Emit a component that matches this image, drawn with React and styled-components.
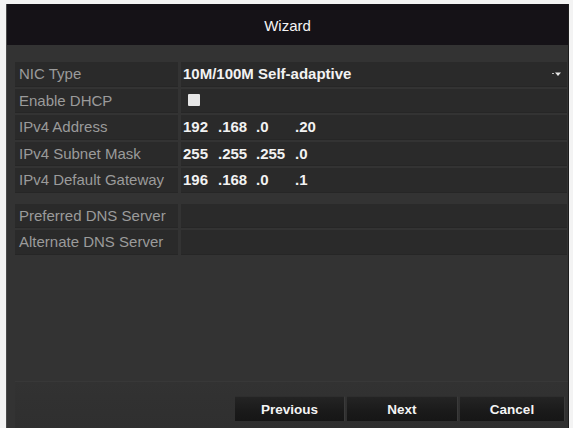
import React from "react";
import styled, { createGlobalStyle } from "styled-components";

const GlobalStyle = createGlobalStyle`
  html, body {
    margin: 0;
    padding: 0;
    background: #f3f3f3;
  }
  * {
    box-sizing: border-box;
  }
`;

const Frame = styled.div`
  height: 428px;
  padding: 4px 4px 0 6px;
  font-family: "Liberation Sans", Arial, sans-serif;
`;

const Window = styled.div`
  width: 563px;
  height: 424px;
  display: flex;
  flex-direction: column;
  background: #333333;
  border-left: 1px solid #4a4a4a;
  border-right: 1px solid #1c1c1c;
`;

const TitleBar = styled.div`
  height: 41px;
  flex-shrink: 0;
  display: flex;
  align-items: center;
  justify-content: center;
  background: #151217;
  color: #f4f4f4;
  font-size: 15px;
  padding-top: 2px;
`;

const Body = styled.div`
  flex: 1;
  display: flex;
  flex-direction: column;
  padding: 17px 1px 0 8px;
`;

const Group = styled.div`
  display: grid;
  grid-template-columns: 163px 1fr;
  column-gap: 3px;
  row-gap: 2px;
  padding-bottom: ${(p) => p.$after || 0}px;
`;

const Label = styled.div`
  height: 24.5px;
  display: flex;
  align-items: center;
  padding-left: 4px;
  background: #2a2a2a;
  color: #9b9b9b;
  font-size: 15px;
  white-space: nowrap;
  border-bottom: 1px solid #262626;
`;

const Value = styled.div`
  height: 24.5px;
  display: flex;
  align-items: center;
  justify-content: space-between;
  padding: 0 6px 0 2px;
  background: #2a2a2a;
  color: #f2f2f2;
  font-size: 15px;
  font-weight: bold;
  white-space: nowrap;
  border-bottom: 1px solid #262626;
`;

const Checkbox = styled.span`
  width: 12px;
  height: 12px;
  margin-left: 5px;
  background: #e6e6e6;
  border-radius: 1px;
`;

const IpField = styled.div`
  display: flex;
`;

const Segment = styled.span`
  width: ${(p) => p.$w}px;
`;

const Footer = styled.div`
  margin-top: auto;
  height: 47px;
  flex-shrink: 0;
  display: flex;
  justify-content: flex-end;
  align-items: flex-start;
  gap: 2px;
  padding: 14px 3px 0 0;
  margin-right: -1px;
  border-top: 1px solid #383838;
  background: linear-gradient(#323232, #2f2f2f);
`;

const Button = styled.button`
  width: ${(p) => p.$w}px;
  height: 25px;
  border: none;
  border-top: 1px solid #2e2e2e;
  border-right: 1px solid #3a3a3a;
  background: linear-gradient(#242424, #1a1a1a 60%, #161616);
  color: #f4f4f4;
  font-family: "Liberation Sans", Arial, sans-serif;
  font-size: 13.5px;
  font-weight: bold;
  padding: 0;
  cursor: pointer;
`;

const Arrow = () => (
  <svg width="9" height="6" viewBox="0 0 9 6">
    <path d="M0 2.5h2" stroke="#bdbdbd" strokeWidth="1" />
    <path d="M3 1.5h6L6 5z" fill="#e8e8e8" />
  </svg>
);

const Ip = ({ parts }) => (
  <IpField>
    {parts.map((p, i) => (
      <Segment key={i} $w={[35, 38, 39, 40][i]}>
        {i > 0 ? "." : ""}
        {p}
      </Segment>
    ))}
  </IpField>
);

const network = [
  { label: "NIC Type", value: <><span>10M/100M Self-adaptive</span><Arrow /></> },
  { label: "Enable DHCP", value: <Checkbox /> },
  { label: "IPv4 Address", value: <Ip parts={["192", "168", "0", "20"]} /> },
  { label: "IPv4 Subnet Mask", value: <Ip parts={["255", "255", "255", "0"]} /> },
  { label: "IPv4 Default Gateway", value: <Ip parts={["196", "168", "0", "1"]} /> },
];

const dns = [
  { label: "Preferred DNS Server", value: null },
  { label: "Alternate DNS Server", value: null },
];

const Rows = ({ items, after }) => (
  <Group $after={after}>
    {items.map((r) => (
      <React.Fragment key={r.label}>
        <Label>{r.label}</Label>
        <Value>{r.value}</Value>
      </React.Fragment>
    ))}
  </Group>
);

export default function App() {
  return (
    <>
      <GlobalStyle />
      <Frame>
        <Window>
          <TitleBar>Wizard</TitleBar>
          <Body>
            <Rows items={network} after={11} />
            <Rows items={dns} />
            <Footer>
              <Button $w={110}>Previous</Button>
              <Button $w={111}>Next</Button>
              <Button $w={105}>Cancel</Button>
            </Footer>
          </Body>
        </Window>
      </Frame>
    </>
  );
}
